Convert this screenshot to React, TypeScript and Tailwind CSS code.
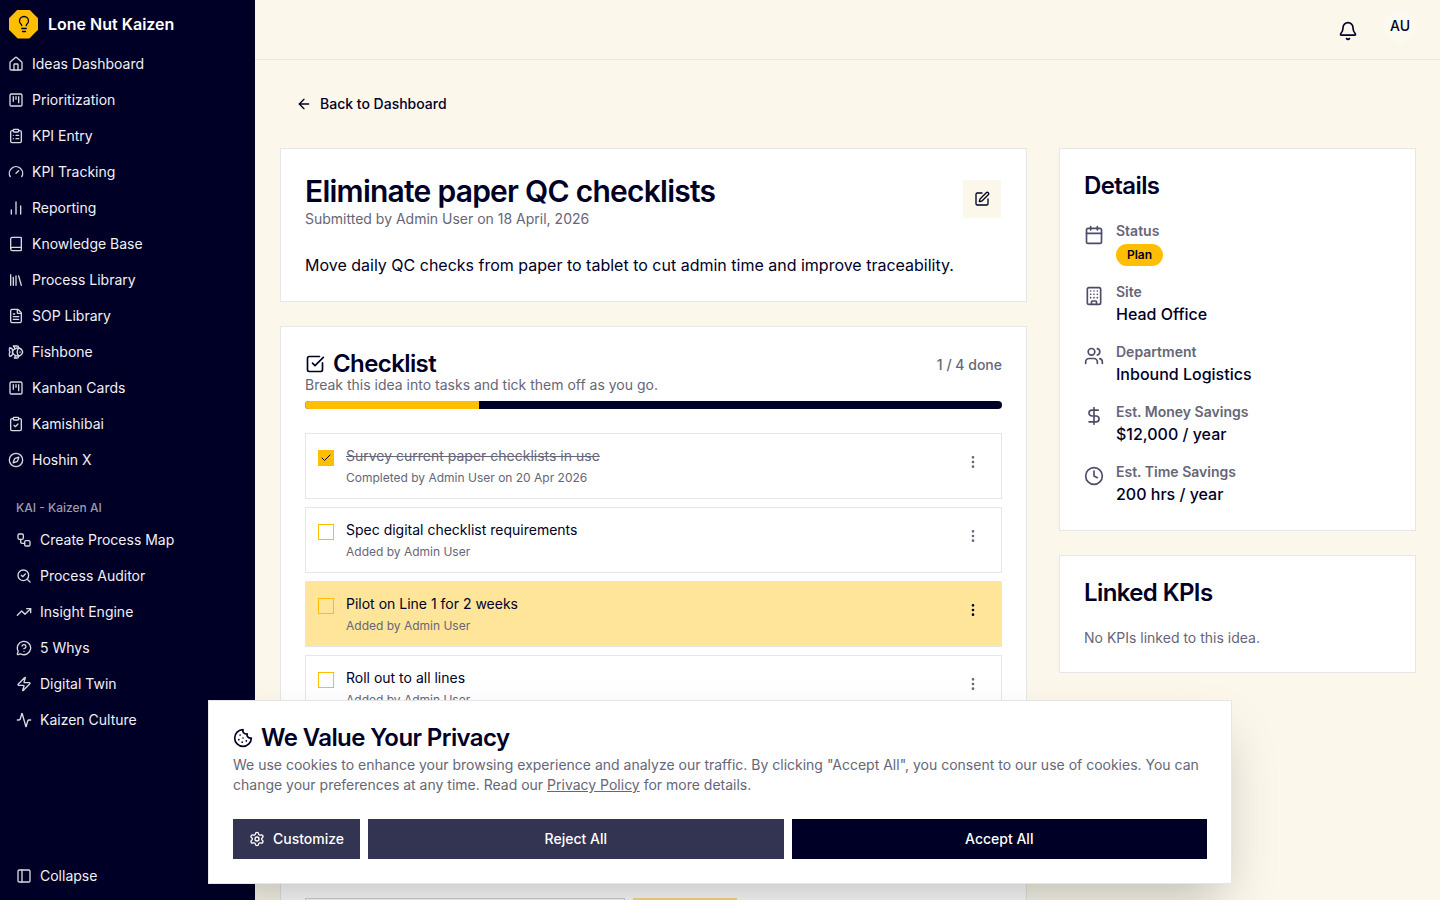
import React from 'react';
import {
  Activity, ArrowLeft, Bell, Book, Building, Calendar, ChartNoAxesColumn, Check, ClipboardCheck, ClipboardList, Clock,
  Compass, Cookie, DollarSign, FileText, Fish, Gauge, House, Library, Lightbulb, MessageCircleQuestion, MoreVertical,
  PanelLeft, SearchCheck, Settings, SquareCheckBig, SquareKanban, SquarePen, TrendingUp, Users, Workflow, Zap,
} from 'lucide-react';

const navItems = [
  { label: 'Ideas Dashboard', icon: House },
  { label: 'Prioritization', icon: SquareKanban },
  { label: 'KPI Entry', icon: ClipboardList },
  { label: 'KPI Tracking', icon: Gauge },
  { label: 'Reporting', icon: ChartNoAxesColumn },
  { label: 'Knowledge Base', icon: Book },
  { label: 'Process Library', icon: Library },
  { label: 'SOP Library', icon: FileText },
  { label: 'Fishbone', icon: Fish },
  { label: 'Kanban Cards', icon: SquareKanban },
  { label: 'Kamishibai', icon: ClipboardCheck },
  { label: 'Hoshin X', icon: Compass },
];

const kaiItems = [
  { label: 'Create Process Map', icon: Workflow },
  { label: 'Process Auditor', icon: SearchCheck },
  { label: 'Insight Engine', icon: TrendingUp },
  { label: '5 Whys', icon: MessageCircleQuestion },
  { label: 'Digital Twin', icon: Zap },
  { label: 'Kaizen Culture', icon: Activity },
];

const tasks = [
  { title: 'Survey current paper checklists in use', sub: 'Completed by Admin User on 20 Apr 2026', done: true },
  { title: 'Spec digital checklist requirements', sub: 'Added by Admin User' },
  { title: 'Pilot on Line 1 for 2 weeks', sub: 'Added by Admin User', active: true },
  { title: 'Roll out to all lines', sub: 'Added by Admin User' },
];

const details = [
  { label: 'Site', value: 'Head Office', icon: Building },
  { label: 'Department', value: 'Inbound Logistics', icon: Users },
  { label: 'Est. Money Savings', value: '$12,000 / year', icon: DollarSign },
  { label: 'Est. Time Savings', value: '200 hrs / year', icon: Clock },
];

const Sidebar = () => (
  <aside className="w-[255px] h-screen shrink-0 bg-[#000027] text-[#f1f1f4] flex flex-col">
    <div className="h-[46px] pl-[9px] pt-[2px] flex items-center gap-[10px] shrink-0">
      <div className="w-[29px] h-[29px] bg-[#ffbf00] flex items-center justify-center [clip-path:polygon(30%_0,70%_0,100%_30%,100%_70%,70%_100%,30%_100%,0_70%,0_30%)]">
        <Lightbulb className="w-[18px] h-[18px] text-[#000027]" strokeWidth={1.75} />
      </div>
      <span className="text-base font-semibold text-white">Lone Nut Kaizen</span>
    </div>
    <nav className="flex flex-col">
      {navItems.map(({ label, icon: Icon }) => (
        <div key={label} className="h-9 pl-2 flex items-center gap-2">
          <Icon className="w-4 h-4 text-[#d9d9df]" />
          <span className="text-sm">{label}</span>
        </div>
      ))}
    </nav>
    <div className="mt-4 h-7 pl-4 flex items-center text-xs font-medium text-[#9b9bab]">KAI - Kaizen AI</div>
    <div className="flex flex-col">
      {kaiItems.map(({ label, icon: Icon }) => (
        <div key={label} className="h-9 pl-4 flex items-center gap-2">
          <Icon className="w-4 h-4 text-[#d9d9df]" />
          <span className="text-sm">{label}</span>
        </div>
      ))}
    </div>
    <div className="mt-auto mb-[6px] h-9 pl-4 flex items-center gap-2">
      <PanelLeft className="w-4 h-4 text-[#d9d9df]" />
      <span className="text-sm">Collapse</span>
    </div>
  </aside>
);

const TaskRow = ({ title, sub, done, active }: { title: string; sub: string; done?: boolean; active?: boolean }) => (
  <div className={`h-[66px] shrink-0 border border-[#e6e6e9] pl-3 pr-5 pt-3 flex gap-3 ${active ? 'bg-[#ffe599]' : 'bg-white'}`}>
    <div className={`mt-1 w-4 h-4 shrink-0 border border-[#ffbf00] flex items-center justify-center ${done ? 'bg-[#ffbf00]' : ''}`}>
      {done && <Check className="w-3 h-3 text-[#000027]" strokeWidth={2} />}
    </div>
    <div className="flex-1 min-w-0">
      <div className={`text-sm leading-5 ${done ? 'line-through text-[#666678]' : 'text-[#000027]'}`}>{title}</div>
      <div className="mt-[2px] text-xs leading-5 text-[#666678]">{sub}</div>
    </div>
    <MoreVertical className={`w-4 h-4 mt-2 ${active ? 'text-[#000027]' : 'text-[#666678]'}`} />
  </div>
);

export default function App() {
  return (
    <div className="relative h-screen overflow-hidden flex bg-[#fbf7eb] font-['Inter',sans-serif] text-[#000027]">
      <Sidebar />
      <div className="flex-1 min-w-0 flex flex-col">
        <header className="h-[60px] shrink-0 border-b border-[#ebe8de] flex items-center justify-end pr-5">
          <Bell className="w-5 h-5 mr-[22px] mt-[2px] text-[#000027]" />
          <div className="w-10 h-10 mb-2 flex items-center justify-center">
            <div className="w-8 h-8 rounded-full bg-[#fcf9f1] flex items-center justify-center text-sm font-medium text-[#000027]">AU</div>
          </div>
        </header>
        <main className="flex-1 min-h-0 pl-[25px] pr-6 pt-6">
          <button className="h-10 pl-4 flex items-center gap-2 text-sm font-medium">
            <ArrowLeft className="w-4 h-4" />
            Back to Dashboard
          </button>
          <div className="mt-6 flex gap-8 items-start">
            <div className="w-[747px] shrink-0 flex flex-col gap-6">
              <section className="h-[154px] bg-white border border-[#e6e6e9] px-6 pt-6 flex justify-between">
                <div>
                  <h1 className="text-3xl leading-9 font-semibold tracking-[-0.75px]">Eliminate paper QC checklists</h1>
                  <p className="mt-[1px] text-sm leading-[18px] text-[#666678]">Submitted by Admin User on 18 April, 2026</p>
                  <p className="mt-[25px] text-base leading-6 whitespace-nowrap">Move daily QC checks from paper to tablet to cut admin time and improve traceability.</p>
                </div>
                <div className="mt-[7px] mr-[1px] w-[38px] h-[38px] bg-[#fbf7eb] flex items-center justify-center">
                  <SquarePen className="w-4 h-4 text-[#000027]" />
                </div>
              </section>
              <section className="bg-white border border-[#e6e6e9] px-6 pt-[23px] pb-6">
                <div className="flex justify-between">
                  <div>
                    <div className="flex items-center gap-2">
                      <SquareCheckBig className="w-5 h-5" />
                      <h2 className="text-2xl leading-[27px] font-semibold tracking-[-0.6px]">Checklist</h2>
                    </div>
                    <p className="text-sm leading-4 text-[#666678]">Break this idea into tasks and tick them off as you go.</p>
                  </div>
                  <span className="mt-[5px] text-sm leading-5 font-medium text-[#666678]">1 / 4 done</span>
                </div>
                <div className="mt-2 h-2 rounded-full bg-[#000027] overflow-hidden">
                  <div className="h-full w-1/4 bg-[#ffbf00]" />
                </div>
                <div className="mt-6 flex flex-col gap-2">
                  {tasks.map((t) => <TaskRow key={t.title} {...t} />)}
                </div>
                <div className="mt-[177px] flex gap-2">
                  <div className="h-10 w-[320px] border border-[#d4d4d8] bg-white" />
                  <div className="h-10 w-[104px] bg-[#ffbf00] opacity-50" />
                </div>
              </section>
            </div>
            <div className="flex-1 min-w-0 flex flex-col gap-6">
              <section className="h-[383px] bg-white border border-[#e6e6e9] px-6 pt-6">
                <h2 className="text-2xl leading-[26px] font-semibold tracking-[-0.6px]">Details</h2>
                <div className="mt-6 flex gap-3">
                  <Calendar className="w-5 h-5 mt-[2px] text-[#4d4d68]" />
                  <div>
                    <div className="text-sm leading-4 font-semibold text-[#666678]">Status</div>
                    <span className="mt-[5px] h-[22px] w-[47px] rounded-full bg-[#ffbf00] flex items-center justify-center text-xs font-semibold text-[#000027]">Plan</span>
                  </div>
                </div>
                {details.map(({ label, value, icon: Icon }) => (
                  <div key={label} className="mt-[18px] flex gap-3">
                    <Icon className="w-5 h-5 mt-[2px] text-[#4d4d68]" />
                    <div>
                      <div className="text-sm leading-4 font-semibold text-[#666678]">{label}</div>
                      <div className="mt-[2px] text-base leading-6 font-medium">{value}</div>
                    </div>
                  </div>
                ))}
              </section>
              <section className="h-[118px] bg-white border border-[#e6e6e9] px-6 pt-6">
                <h2 className="text-2xl leading-[26px] font-semibold tracking-[-0.6px]">Linked KPIs</h2>
                <p className="mt-[22px] text-sm leading-5 text-[#666678]">No KPIs linked to this idea.</p>
              </section>
            </div>
          </div>
        </main>
      </div>
      <div className="absolute left-[208px] bottom-4 w-[1024px] h-[184px] bg-white border border-[#e6e6e9] shadow-[0_25px_50px_-12px_rgba(0,0,0,0.25)] p-6">
        <div className="flex items-center gap-2">
          <Cookie className="w-5 h-5" />
          <h2 className="text-2xl leading-[26px] font-semibold tracking-[-0.6px]">We Value Your Privacy</h2>
        </div>
        <p className="mt-1 text-sm leading-5 text-[#666678]">
          We use cookies to enhance your browsing experience and analyze our traffic. By clicking "Accept All", you consent to our use of cookies. You can change your preferences at any time. Read our <span className="underline">Privacy Policy</span> for more details.
        </p>
        <div className="mt-6 flex gap-2">
          <button className="h-10 w-[127px] shrink-0 bg-[#333352] text-white text-sm font-medium flex items-center justify-center gap-2">
            <Settings className="w-4 h-4" />
            Customize
          </button>
          <button className="h-10 flex-1 bg-[#333352] text-white text-sm font-medium">Reject All</button>
          <button className="h-10 flex-1 bg-[#000027] text-white text-sm font-medium">Accept All</button>
        </div>
      </div>
    </div>
  );
}
